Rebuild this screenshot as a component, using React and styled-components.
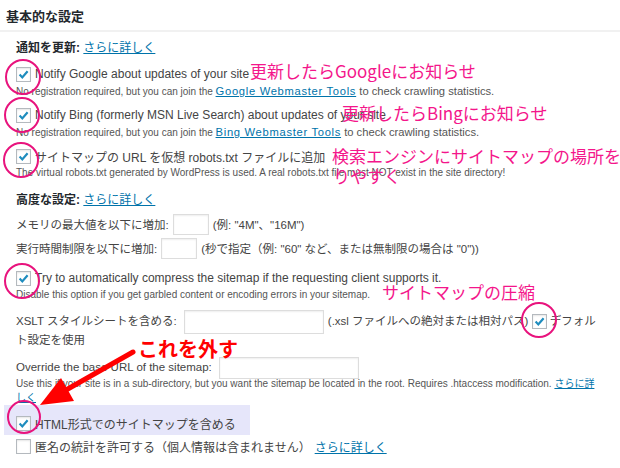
import React from 'react'
import styled, { createGlobalStyle } from 'styled-components'

const GlobalStyle = createGlobalStyle`
  html, body { margin: 0; padding: 0; background: #fff; }
  body {
    font-family: "Liberation Sans", "Noto Sans CJK JP", sans-serif;
    color: #444;
  }
`

const Page = styled.div`
  position: relative;
  width: 620px;
  height: 468px;
  overflow: hidden;
  background: #fff;
`

const Header = styled.div`
  height: 30px;
  padding-left: 6px;
  display: flex;
  align-items: center;
  border-bottom: 2px solid #f1f1f1;
`

const Title = styled.h3`
  margin: 0;
  font-size: 13px;
  font-weight: bold;
  color: #23282d;
`

const Body = styled.div`
  padding-left: 16px;
`

const SectionLabel = styled.div`
  margin-top: ${p => p.$top}px;
  height: 18px;
  line-height: 18px;
  font-size: 12px;
  color: #23282d;
  b { font-weight: bold; }
`

const Link = styled.a`
  color: #0073aa;
  text-decoration: underline;
  font-size: ${p => (p.$size ? `${p.$size}px` : 'inherit')};
  letter-spacing: ${p => p.$track || 0}px;
`

const Tail = styled.span`
  font-size: ${p => p.$size}px;
`

const CheckRow = styled.label`
  display: flex;
  align-items: center;
  gap: 4px;
  height: 20px;
  margin-top: ${p => p.$top || 0}px;
  font-size: 12px;
  white-space: nowrap;
`

const Desc = styled.div`
  line-height: 14px;
  font-size: 10px;
  color: #555;
  white-space: nowrap;
`

const Box = styled.span`
  flex: none;
  box-sizing: border-box;
  width: 15px;
  height: 15px;
  border: 1px solid #b4b9be;
  background: #fff;
  box-shadow: inset 0 1px 2px rgba(0, 0, 0, 0.1);
  display: inline-flex;
  align-items: center;
  justify-content: center;
  vertical-align: middle;
`

const Check = ({ checked }) => (
  <Box>
    {checked && (
      <svg width="13" height="13" viewBox="0 0 13 13">
        <path d="M2.6 6.6 L5.3 9.4 L10.6 3.2" fill="none" stroke="#1e8cbe" strokeWidth="2.2" />
      </svg>
    )}
  </Box>
)

const FieldRow = styled.div`
  height: 24px;
  margin-top: ${p => p.$top || 0}px;
  display: flex;
  align-items: center;
  font-size: 11.5px;
  white-space: nowrap;
`

const TextInput = styled.input`
  box-sizing: border-box;
  width: ${p => p.$w}px;
  height: ${p => p.$h}px;
  margin: ${p => (24 - p.$h) / 2 - 3}px 4px ${p => (24 - p.$h) / 2 - 3}px 4px;
  padding: 0;
  border: 1px solid #ddd;
  box-shadow: inset 0 1px 2px rgba(0, 0, 0, 0.07);
  background: #fff;
  vertical-align: middle;
`

const FlowBlock = styled.div`
  margin-top: ${p => p.$top}px;
  line-height: 18px;
  font-size: 11.5px;
  white-space: nowrap;
`

const HighlightRow = styled.label`
  display: flex;
  align-items: center;
  gap: 4px;
  box-sizing: border-box;
  width: 246px;
  height: 30px;
  margin-left: -12px;
  padding: 8px 0 0 12px;
  background: #e6e6fa;
  font-size: 12px;
  white-space: nowrap;
`

const Ring = styled.span`
  position: absolute;
  left: ${p => p.$x - p.$d / 2}px;
  top: ${p => p.$y - p.$d / 2}px;
  width: ${p => p.$d}px;
  height: ${p => p.$d}px;
  box-sizing: border-box;
  border: 2px solid #e8137d;
  border-radius: 50%;
  pointer-events: none;
`

const Note = styled.span`
  position: absolute;
  left: ${p => p.$x}px;
  top: ${p => p.$y}px;
  font-family: "Noto Sans CJK JP", sans-serif;
  font-size: ${p => p.$size || 17}px;
  font-weight: ${p => (p.$bold ? 700 : 400)};
  line-height: 20px;
  color: ${p => p.$color || '#f4168b'};
  white-space: nowrap;
  pointer-events: none;
`

const Overlay = styled.svg`
  position: absolute;
  left: 0;
  top: 0;
  pointer-events: none;
`

export default function App() {
  return (
    <Page>
      <GlobalStyle />
      <Header>
        <Title>基本的な設定</Title>
      </Header>
      <Body>
        <SectionLabel $top={7}>
          <b>通知を更新:</b> <Link>さらに詳しく</Link>
        </SectionLabel>

        <CheckRow $top={7}>
          <Check checked />
          Notify Google about updates of your site
        </CheckRow>
        <Desc>
          No registration required, but you can join the <Link $size={11.2} $track={0.7}>Google Webmaster Tools</Link>
          <Tail $size={11.2}> to check crawling statistics.</Tail>
        </Desc>

        <CheckRow $top={6}>
          <Check checked />
          Notify Bing (formerly MSN Live Search) about updates of your site
        </CheckRow>
        <Desc>
          No registration required, but you can join the <Link $size={11.2} $track={0.7}>Bing Webmaster Tools</Link>
          <Tail $size={11.2}> to check crawling statistics.</Tail>
        </Desc>

        <CheckRow $top={6}>
          <Check checked />
          サイトマップの URL を仮想 robots.txt ファイルに追加
        </CheckRow>
        <Desc>
          The virtual robots.txt generated by WordPress is used. A real robots.txt file must NOT exist in the site directory!
        </Desc>

        <SectionLabel $top={11}>
          <b>高度な設定:</b> <Link>さらに詳しく</Link>
        </SectionLabel>

        <FieldRow $top={3}>
          メモリの最大値を以下に増加: <TextInput $w={36} $h={21} readOnly /> (例: "4M"、"16M")
        </FieldRow>
        <FieldRow>
          実行時間制限を以下に増加: <TextInput $w={36} $h={21} readOnly /> (秒で指定（例: "60" など、または無制限の場合は "0"))
        </FieldRow>

        <CheckRow $top={8}>
          <Check checked />
          Try to automatically compress the sitemap if the requesting client supports it.
        </CheckRow>
        <Desc>Disable this option if you get garbled content or encoding errors in your sitemap.</Desc>

        <FlowBlock $top={10}>
          XSLT スタイルシートを含める: <TextInput $w={140} $h={24} readOnly />(.xsl ファイルへの絶対または相対パス) <Check checked /> デフォル
          <br />
          ト設定を使用
        </FlowBlock>

        <FlowBlock $top={9}>
          Override the base URL of the sitemap: <TextInput $w={140} $h={22} readOnly />
        </FlowBlock>
        <Desc>
          Use this if your site is in a sub-directory, but you want the sitemap be located in the root. Requires .htaccess modification.{' '}
          <Link>
            さらに詳
            <br />
            しく
          </Link>
        </Desc>

        <HighlightRow>
          <Check checked />
          HTML形式でのサイトマップを含める
        </HighlightRow>

        <CheckRow $top={2}>
          <Check />
          匿名の統計を許可する（個人情報は含まれません） <Link>さらに詳しく</Link>
        </CheckRow>
      </Body>

      <Ring $x={23} $y={77} $d={36} />
      <Ring $x={22} $y={115} $d={36} />
      <Ring $x={21} $y={160} $d={36} />
      <Ring $x={22} $y={281} $d={36} />
      <Ring $x={539} $y={320} $d={36} />
      <Ring $x={24} $y={417} $d={34} />

      <Note $x={250} $y={61}>更新したらGoogleにお知らせ</Note>
      <Note $x={342} $y={103}>更新したらBingにお知らせ</Note>
      <Note $x={332} $y={146}>検索エンジンにサイトマップの場所を知</Note>
      <Note $x={333} $y={166}>りやすく</Note>
      <Note $x={382} $y={282}>サイトマップの圧縮</Note>
      <Note $x={138} $y={339} $size={20} $bold $color="#ff0000">これを外す</Note>

      <Overlay width="620" height="468" viewBox="0 0 620 468">
        <line x1="133" y1="352" x2="66" y2="390" stroke="#ff0000" strokeWidth="5" strokeLinecap="round" />
        <polygon points="40,405 74,401 61,378" fill="#ff0000" />
      </Overlay>
    </Page>
  )
}
